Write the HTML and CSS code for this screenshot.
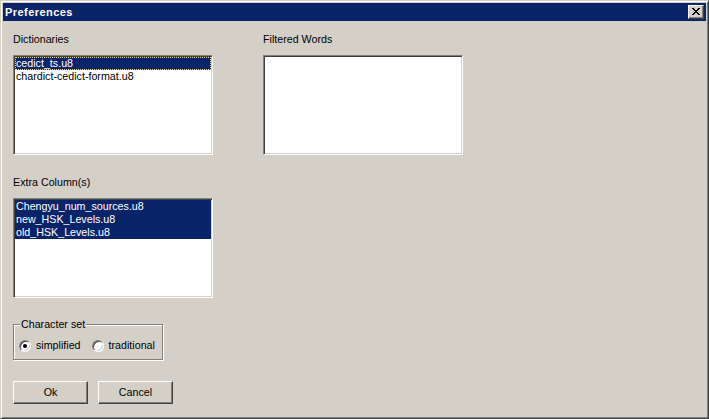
FILE: index.html
```html
<!DOCTYPE html>
<html>
<head>
<meta charset="utf-8">
<title>Preferences</title>
<link rel="stylesheet" href="styles.css">
</head>
<body>
<div class="window">
  <div class="titlebar">
    <span class="title">Preferences</span>
    <span class="close-btn">
      <svg width="8" height="7" viewBox="0 0 8 7"><path d="M0 0h2v1h1v1h2V1h1V0h2v1H7v1H6v1H5v1h1v1h1v1h1v1H6V6H5V5H3v1H2v1H0V6h1V5h1V4h1V3H2V2H1V1H0z" fill="#000"/></svg>
    </span>
  </div>
  <div class="content">
    <div class="top-row">
      <div class="column">
        <div class="label">Dictionaries</div>
        <div class="listbox">
          <div class="item selected focused">cedict_ts.u8</div>
          <div class="item">chardict-cedict-format.u8</div>
        </div>
      </div>
      <div class="column">
        <div class="label">Filtered Words</div>
        <div class="listbox"></div>
      </div>
    </div>
    <div class="column extra">
      <div class="label">Extra Column(s)</div>
      <div class="listbox">
        <div class="item selected">Chengyu_num_sources.u8</div>
        <div class="item selected">new_HSK_Levels.u8</div>
        <div class="item selected">old_HSK_Levels.u8</div>
      </div>
    </div>
    <fieldset class="groupbox">
      <legend class="legend">Character set</legend>
      <div class="radios">
        <span class="radio-opt"><span class="radio checked"></span><span>simplified</span></span>
        <span class="radio-opt"><span class="radio"></span><span>traditional</span></span>
      </div>
    </fieldset>
    <div class="buttons">
      <span class="btn">Ok</span>
      <span class="btn">Cancel</span>
    </div>
  </div>
</div>
</body>
</html>
```
FILE: styles.css
```css
html, body {
  margin: 0;
  padding: 0;
  background: #d4d0c8;
}
body {
  font-family: "Liberation Sans", Arial, sans-serif;
  font-size: 10.7px;
  color: #000;
}
.window {
  box-sizing: border-box;
  width: 709px;
  height: 419px;
  background: #d4d0c8;
  border: 1px solid;
  border-color: #d4d0c8 #404040 #404040 #d4d0c8;
  box-shadow: inset 1px 1px #ffffff, inset -1px -1px #808080;
  padding: 2px;
  display: flex;
  flex-direction: column;
}
.titlebar {
  height: 18px;
  background: #0a246a;
  display: flex;
  align-items: center;
  justify-content: space-between;
  padding: 0 2px 0 2px;
}
.title {
  color: #fff;
  font-weight: bold;
  font-size: 11px;
  letter-spacing: 0.45px;
  line-height: 18px;
}
.close-btn {
  box-sizing: border-box;
  width: 16px;
  height: 14px;
  background: #d4d0c8;
  border: 1px solid;
  border-color: #ffffff #404040 #404040 #ffffff;
  box-shadow: inset -1px -1px #808080;
  display: flex;
  align-items: center;
  justify-content: center;
  padding: 0 1px 1px 0;
}
.close-btn svg { display: block; }
.content {
  padding: 12px 10px 0 10px;
  display: flex;
  flex-direction: column;
  align-items: flex-start;
}
.top-row {
  display: flex;
  gap: 50px;
}
.column {
  width: 200px;
  display: flex;
  flex-direction: column;
}
.column.extra {
  margin-top: 21px;
}
.label {
  line-height: 13px;
  height: 13px;
  margin-bottom: 9px;
}
.listbox {
  box-sizing: border-box;
  width: 200px;
  height: 100px;
  background: #fff;
  border: 1px solid;
  border-color: #808080 #ffffff #ffffff #808080;
  box-shadow: inset 1px 1px #404040, inset -1px -1px #d4d0c8;
  padding: 1px;
}
.item {
  height: 13px;
  line-height: 13px;
  padding-left: 1px;
  white-space: nowrap;
}
.item.selected {
  background: #0a246a;
  color: #fff;
}
.item.focused {
  outline: 1px dotted #f0d890;
  outline-offset: -1px;
}
.groupbox {
  margin: 20px 0 0 0;
  box-sizing: border-box;
  width: 150px;
  border: 1px solid #808080;
  box-shadow: inset 1px 1px #ffffff, 1px 1px #ffffff;
  padding: 8px 4px 7px 5px;
  min-inline-size: 0;
}
.legend {
  padding: 0 1px;
  margin-left: 1px;
  line-height: 13px;
  background: #d4d0c8;
}
.radios {
  display: flex;
  gap: 11px;
  height: 13px;
  align-items: center;
}
.radio-opt {
  display: flex;
  align-items: center;
  gap: 5px;
  line-height: 13px;
}
.radio {
  box-sizing: border-box;
  width: 12px;
  height: 12px;
  border-radius: 50%;
  background: #fff;
  border: 1px solid;
  border-color: #808080 #ffffff #ffffff #808080;
  box-shadow: inset 1px 1px #404040, inset -1px -1px #d4d0c8;
  display: flex;
  align-items: center;
  justify-content: center;
}
.radio.checked::after {
  content: "";
  width: 4px;
  height: 4px;
  border-radius: 50%;
  background: #000;
}
.buttons {
  margin-top: 21px;
  display: flex;
  gap: 10px;
}
.btn {
  box-sizing: border-box;
  width: 75px;
  height: 23px;
  border: 1px solid;
  border-color: #ffffff #404040 #404040 #ffffff;
  box-shadow: inset -1px -1px #808080;
  display: flex;
  align-items: center;
  justify-content: center;
  padding-bottom: 1px;
}
```
